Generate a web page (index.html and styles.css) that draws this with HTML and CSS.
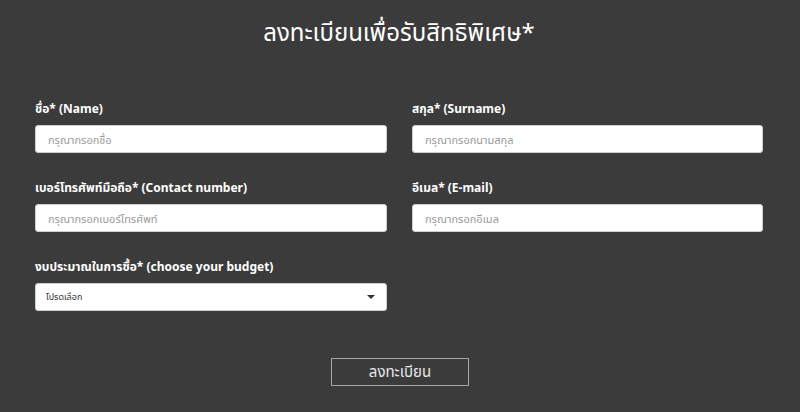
FILE: index.html
```html
<!DOCTYPE html>
<html lang="th">
<head>
<meta charset="utf-8">
<title>ลงทะเบียน</title>
<link rel="stylesheet" href="styles.css">
</head>
<body>
<main class="page">
  <h1 class="title">ลงทะเบียนเพื่อรับสิทธิพิเศษ*</h1>
  <form class="form">
    <div class="grid">
      <div class="field">
        <label class="label">ชื่อ* (Name)</label>
        <input class="input" type="text" placeholder="กรุณากรอกชื่อ">
      </div>
      <div class="field">
        <label class="label">สกุล* (Surname)</label>
        <input class="input" type="text" placeholder="กรุณากรอกนามสกุล">
      </div>
      <div class="field">
        <label class="label">เบอร์โทรศัพท์มือถือ* (Contact number)</label>
        <input class="input" type="text" placeholder="กรุณากรอกเบอร์โทรศัพท์">
      </div>
      <div class="field">
        <label class="label">อีเมล* (E-mail)</label>
        <input class="input" type="text" placeholder="กรุณากรอกอีเมล">
      </div>
      <div class="field">
        <label class="label">งบประมาณในการซื้อ* (choose your budget)</label>
        <div class="select">
          <span class="select-text">โปรดเลือก</span>
          <span class="caret"></span>
        </div>
      </div>
    </div>
    <div class="actions">
      <button class="submit" type="button">ลงทะเบียน</button>
    </div>
  </form>
</main>
</body>
</html>
```
FILE: styles.css
```css
* { box-sizing: border-box; }
html, body { margin: 0; padding: 0; }
body {
  background: #3b3b3b;
  font-family: "Noto Sans", "Noto Sans Thai", "Liberation Sans", sans-serif;
  color: #ffffff;
  width: 800px;
  height: 412px;
  overflow: hidden;
}
.page {
  padding: 14px 37px 0 35px;
}
.title {
  margin: 0;
  text-align: center;
  font-weight: 400;
  font-size: 24px;
  line-height: 36px;
  color: #ffffff;
}
.form {
  margin-top: 51px;
}
.grid {
  display: grid;
  grid-template-columns: 352px 351px;
  grid-auto-rows: 52px;
  column-gap: 25px;
  row-gap: 27px;
}
.field {
  display: flex;
  flex-direction: column;
  gap: 8px;
}
.label {
  display: block;
  height: 16px;
  font-size: 12px;
  font-weight: 700;
  line-height: 16px;
  color: #ffffff;
  white-space: nowrap;
}
.input {
  display: block;
  height: 28px;
  flex: none;
  border: 1px solid #cfcfcf;
  border-radius: 3px;
  background: #ffffff;
  padding: 0 12px;
  margin: 0;
  font-family: inherit;
  font-size: 11px;
  color: #333;
  outline: none;
}
.input::placeholder { color: #9a9a9a; }
.select {
  height: 28px;
  flex: none;
  border: 1px solid #cfcfcf;
  border-radius: 3px;
  background: #ffffff;
  padding: 0 11px 0 10px;
  display: flex;
  align-items: center;
  justify-content: space-between;
}
.select-text {
  font-size: 9px;
  color: #333333;
}
.caret {
  width: 0;
  height: 0;
  border-left: 4px solid transparent;
  border-right: 4px solid transparent;
  border-top: 4px solid #333333;
}
.actions {
  display: flex;
  justify-content: center;
  margin-top: 47px;
  padding-left: 2px;
}
.submit {
  width: 138px;
  height: 28px;
  background: transparent;
  border: 1px solid #a8a8a8;
  color: #e8e8e8;
  font-family: inherit;
  font-size: 15px;
  padding: 0;
}
```
